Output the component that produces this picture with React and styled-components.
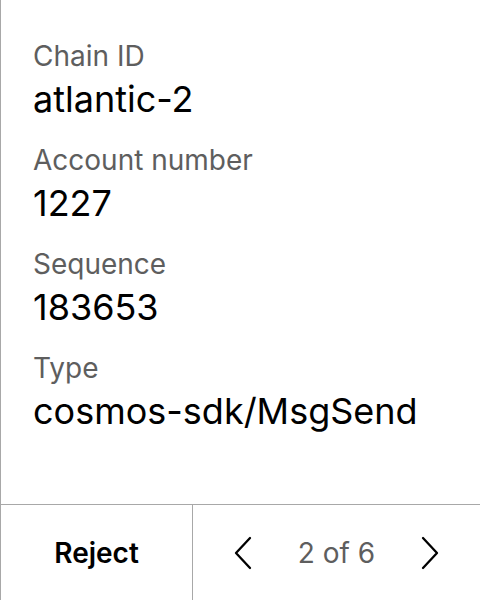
import React from 'react';
import styled, { createGlobalStyle } from 'styled-components';

const GlobalStyle = createGlobalStyle`
  html, body {
    margin: 0;
    padding: 0;
    background: #ffffff;
  }
  body {
    font-family: 'Inter', 'Liberation Sans', sans-serif;
  }
`;

const Page = styled.div`
  width: 480px;
  height: 600px;
  display: flex;
  flex-direction: column;
  border-left: 1px solid #a8a8a8;
  box-sizing: border-box;
`;

const Details = styled.div`
  flex: 1;
  display: flex;
  flex-direction: column;
  gap: 18px;
  padding: 37px 32px 0;
`;

const Field = styled.div`
  display: flex;
  flex-direction: column;
`;

const Label = styled.div`
  color: #5e5e5e;
  font-size: 28px;
  line-height: 38px;
`;

const Value = styled.div`
  color: #000000;
  font-size: 36px;
  line-height: 48px;
`;

const Footer = styled.div`
  height: 96px;
  box-sizing: border-box;
  display: flex;
  border-top: 1px solid #a8a8a8;
`;

const RejectButton = styled.button`
  width: 192px;
  border: none;
  border-right: 1px solid #a8a8a8;
  background: transparent;
  font-family: 'Inter', 'Liberation Sans', sans-serif;
  font-size: 28px;
  font-weight: 600;
  color: #000000;
  padding: 0;
`;

const Pager = styled.div`
  flex: 1;
  display: flex;
  align-items: center;
  justify-content: center;
  gap: 46px;
`;

const Arrow = styled.button`
  border: none;
  background: transparent;
  padding: 0;
  display: flex;
  align-items: center;
`;

const PageText = styled.span`
  font-size: 28px;
  color: #5e5e5e;
`;

const Chevron = ({ dir }) => (
  <svg width="18" height="34" viewBox="0 0 18 34" fill="none">
    <path
      d={dir === 'left' ? 'M16 2 L2 17 L16 32' : 'M2 2 L16 17 L2 32'}
      stroke="#000"
      strokeWidth="2.3"
      strokeLinecap="round"
      strokeLinejoin="round"
    />
  </svg>
);

const fields = [
  { label: 'Chain ID', value: 'atlantic-2' },
  { label: 'Account number', value: '1227' },
  { label: 'Sequence', value: '183653' },
  { label: 'Type', value: 'cosmos-sdk/MsgSend' },
];

const App = () => {
  return (
    <Page>
      <GlobalStyle />
      <Details>
        {fields.map((f) => (
          <Field key={f.label}>
            <Label>{f.label}</Label>
            <Value>{f.value}</Value>
          </Field>
        ))}
      </Details>
      <Footer>
        <RejectButton>Reject</RejectButton>
        <Pager>
          <Arrow><Chevron dir="left" /></Arrow>
          <PageText>2 of 6</PageText>
          <Arrow><Chevron dir="right" /></Arrow>
        </Pager>
      </Footer>
    </Page>
  );
};

export default App;
